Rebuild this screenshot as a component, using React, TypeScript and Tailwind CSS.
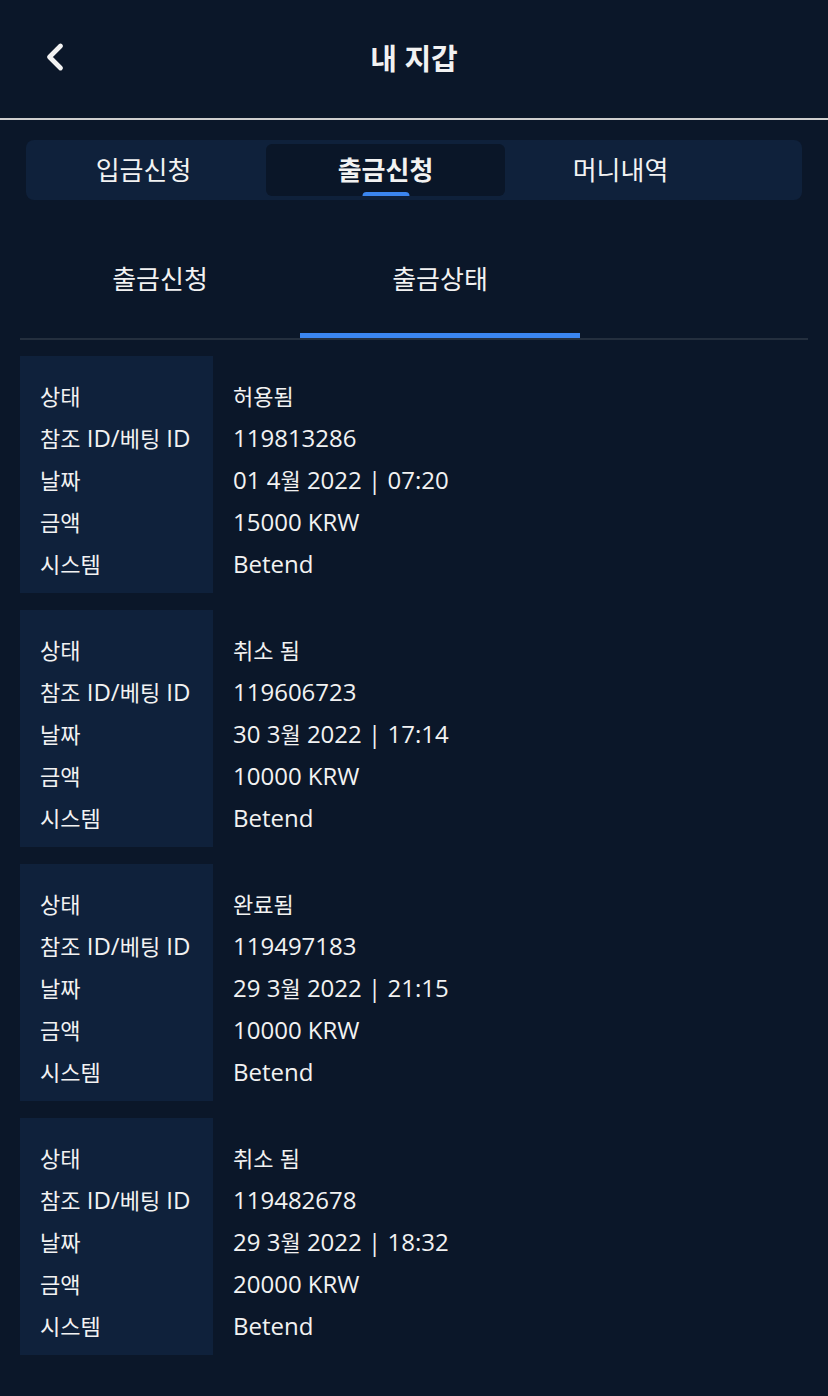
import { ChevronLeft } from "lucide-react";

type Entry = {
  status: string;
  ref: string;
  date: string;
  amount: string;
  system: string;
};

const records: Entry[] = [
  { status: "허용됨", ref: "119813286", date: "01 4월 2022 | 07:20", amount: "15000 KRW", system: "Betend" },
  { status: "취소 됨", ref: "119606723", date: "30 3월 2022 | 17:14", amount: "10000 KRW", system: "Betend" },
  { status: "완료됨", ref: "119497183", date: "29 3월 2022 | 21:15", amount: "10000 KRW", system: "Betend" },
  { status: "취소 됨", ref: "119482678", date: "29 3월 2022 | 18:32", amount: "20000 KRW", system: "Betend" },
];

const labels = ["상태", "참조 ID/베팅 ID", "날짜", "금액", "시스템"];

// hangul runs are set a touch smaller than the latin text
function Mixed({ text }: { text: string }) {
  const parts = text.split(/([\uac00-\ud7a3]+)/);
  return (
    <>
      {parts.map((p, i) =>
        /[\uac00-\ud7a3]/.test(p) ? (
          <span key={i} className="text-[22px]">
            {p}
          </span>
        ) : (
          p
        )
      )}
    </>
  );
}

function RecordCard({ r }: { r: Entry }) {
  const values = [r.status, r.ref, r.date, r.amount, r.system];
  return (
    <div className="flex">
      <div className="w-[193px] shrink-0 bg-[#0f213b] pl-5 pt-[19px] pb-[8px]">
        {labels.map((l) => (
          <div key={l} className="h-[42px] leading-[42px] whitespace-nowrap">
            <Mixed text={l} />
          </div>
        ))}
      </div>
      <div className="pl-5 pt-[19px]">
        {values.map((v, i) => (
          <div key={i} className="h-[42px] leading-[42px] whitespace-pre">
            <Mixed text={v} />
          </div>
        ))}
      </div>
    </div>
  );
}

export default function App() {
  return (
    <div
      className="min-h-[1396px] w-[828px] bg-[#0b1729] text-[#f2f2f2]"
      style={{ fontFamily: '"Open Sans", "Noto Sans CJK KR", sans-serif' }}
    >
      <header className="relative flex h-[120px] items-center justify-center border-b-2 border-[#cfcfcf]">
        <ChevronLeft className="absolute left-[33px] top-[35px] h-[44px] w-[44px]" strokeWidth={2.6} />
        <h1 className="text-[29px] font-bold">내 지갑</h1>
      </header>

      <div className="mx-[26px] mt-[20px] flex h-[60px] items-center rounded-lg bg-[#0f213b] px-[1px]">
        {["입금신청", "출금신청", "머니내역"].map((t, i) => (
          <div
            key={t}
            className={
              i === 1
                ? "relative flex h-[52px] w-[239px] items-center justify-center rounded-md bg-[#0a1628] text-[26px] font-bold"
                : "flex h-[52px] w-[239px] items-center justify-center text-[26px]"
            }
          >
            <span className={i === 0 ? "-ml-[6px]" : i === 2 ? "-ml-[8px]" : ""}>{t}</span>
            {i === 1 && (
              <span className="absolute bottom-0 left-1/2 h-[4px] w-[47px] -translate-x-1/2 rounded-t-sm bg-[#3b86f0]" />
            )}
          </div>
        ))}
      </div>

      <div className="mx-5 mt-[20px] flex border-b-2 border-[#242f3e]">
        <div className="flex h-[118px] w-[280px] items-center justify-center text-[26px]">출금신청</div>
        <div className="relative flex h-[118px] w-[280px] items-center justify-center text-[26px]">
          출금상태
          <span className="absolute bottom-0 left-0 h-[5px] w-full bg-[#3b86f0]" />
        </div>
      </div>

      <div className="mx-5 mt-[16px] flex flex-col gap-[17px] text-[24px]">
        {records.map((r, i) => (
          <RecordCard key={i} r={r} />
        ))}
      </div>
    </div>
  );
}
